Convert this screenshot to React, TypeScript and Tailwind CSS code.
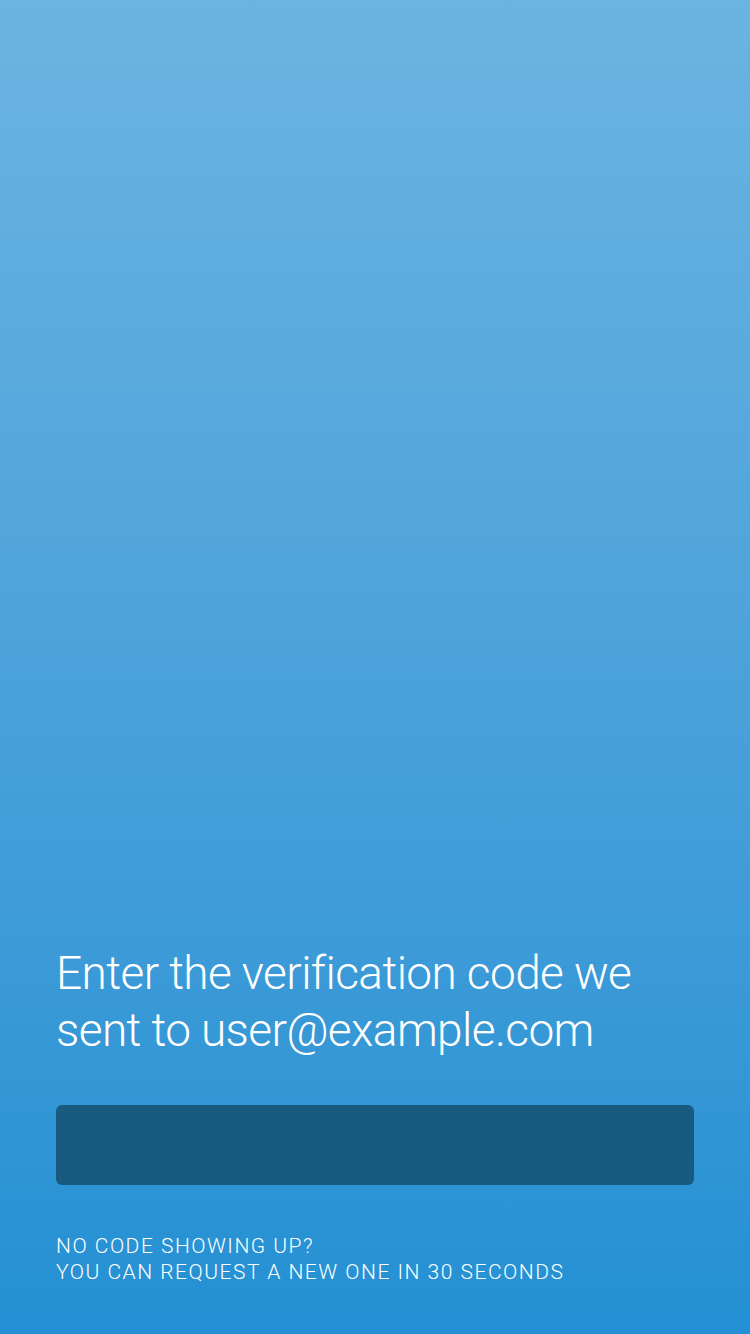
import React from "react";

export default function App() {
  return (
    <div
      className="w-[750px] h-[1334px] flex flex-col justify-end px-[56px] pb-[49px] bg-gradient-to-b from-[#6bb4e1] to-[#2290d3] text-white"
      style={{ fontFamily: "Roboto, 'Liberation Sans', sans-serif" }}
    >
      <h1 className="text-[46px] leading-[57px] font-light tracking-[-0.6px]">
        Enter the verification code we sent to user@example.com
      </h1>
      <input
        type="text"
        aria-label="Verification code"
        className="mt-[46px] h-[80px] w-full rounded-[6px] bg-[#195a80] outline-none px-4 text-white text-[32px]"
      />
      <div className="mt-[48px] text-[21px] leading-[26px] font-light tracking-[1.5px]">
        <p>NO CODE SHOWING UP?</p>
        <p>YOU CAN REQUEST A NEW ONE IN 30 SECONDS</p>
      </div>
    </div>
  );
}
